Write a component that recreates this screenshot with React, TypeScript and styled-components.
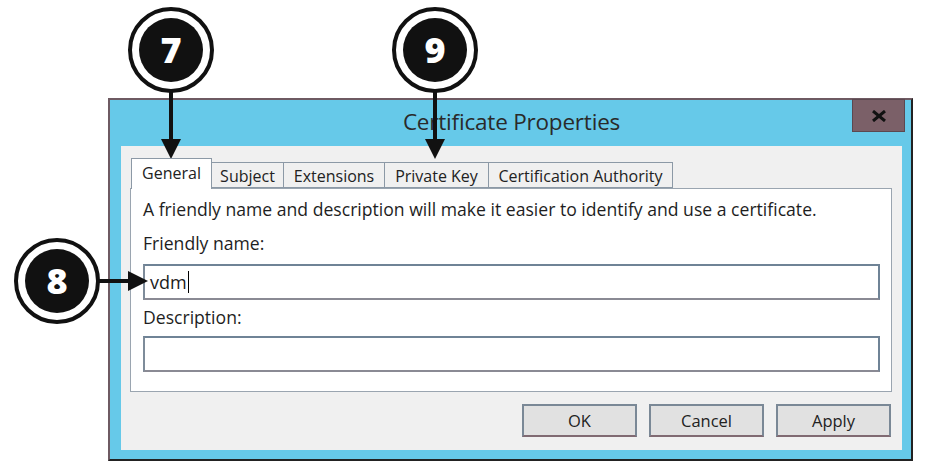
import React from "react";
import styled, { createGlobalStyle } from "styled-components";

const Global = createGlobalStyle`
  html, body { margin: 0; padding: 0; background: #ffffff; }
  body { font-family: "Open Sans", "Noto Sans", "Liberation Sans", sans-serif; color: #1c1c1c; }
`;

const Page = styled.div`
  position: relative;
  width: 926px;
  height: 476px;
  overflow: hidden;
  padding: 98px 0 0 108px;
  box-sizing: border-box;
`;

const Window = styled.div`
  width: 805px;
  height: 363px;
  box-sizing: border-box;
  background: #66c9e9;
  border-top: 2px solid #6e5a62;
  border-left: 2px solid #6e5a62;
  border-right: 2px solid #222;
  border-bottom: 2px solid #222;
  display: flex;
  flex-direction: column;
  padding: 0 9px 9px 11px;
`;

const TitleBar = styled.div`
  height: 46px;
  display: flex;
  align-items: flex-start;
  justify-content: center;
  position: relative;
`;

const Title = styled.div`
  margin-top: 6px;
  font-size: 22.5px;
  color: #2a2a2a;
  letter-spacing: -0.2px;
`;

const CloseButton = styled.div`
  position: absolute;
  right: -3px;
  top: -1px;
  width: 53px;
  height: 33px;
  background: #7b6068;
  border: 1px solid #5c4850;
  box-sizing: border-box;
  display: flex;
  align-items: center;
  justify-content: center;
`;

const Client = styled.div`
  flex: 1;
  background: #f0f0f0;
  display: flex;
  flex-direction: column;
  padding: 12px 10px 13px 9px;
`;

const TabRow = styled.div`
  display: flex;
  align-items: flex-end;
  height: 30px;
  padding-left: 1px;
  position: relative;
  z-index: 1;
`;

const Tab = styled.div<{ $w: number; $active?: boolean }>`
  width: ${(p) => p.$w}px;
  height: ${(p) => (p.$active ? 31 : 26)}px;
  box-sizing: border-box;
  border: 1px solid #8c99a6;
  border-bottom: ${(p) => (p.$active ? "none" : "1px solid #8c99a6")};
  margin-left: ${(p) => (p.$active ? 0 : -1)}px;
  background: ${(p) => (p.$active ? "#ffffff" : "#f0f0f0")};
  font-size: 16px;
  line-height: 20px;
  display: flex;
  justify-content: center;
  align-items: flex-start;
  padding-top: ${(p) => (p.$active ? 4 : 3)}px;
  margin-bottom: ${(p) => (p.$active ? -1 : 0)}px;
  white-space: nowrap;
  color: #222;
  &:first-child { margin-left: 0; }
`;

const Panel = styled.div`
  height: 204px;
  box-sizing: border-box;
  background: #ffffff;
  border: 1px solid #9aa5b0;
  padding: 8px 12px 0 12px;
  display: flex;
  flex-direction: column;
`;

const Label = styled.div<{ $mt?: number }>`
  font-size: 17.6px;
  margin-top: ${(p) => p.$mt ?? 0}px;
  height: 24px;
  line-height: 24px;
  white-space: nowrap;
  color: #1e1e1e;
`;

const Input = styled.div<{ $mt: number }>`
  margin-top: ${(p) => p.$mt}px;
  width: 737px;
  height: 36px;
  box-sizing: border-box;
  border: 2px solid #6f8396;
  border-bottom-color: #8a8a94;
  border-left-color: #7e8c9a;
  background: #fff;
  font-size: 18px;
  display: flex;
  align-items: center;
  padding-left: 5px;
`;

const Caret = styled.span`
  display: inline-block;
  width: 1px;
  height: 22px;
  background: #000;
  margin-left: 1px;
`;

const ButtonRow = styled.div`
  display: flex;
  justify-content: flex-end;
  gap: 12px;
  margin-top: 12px;
  padding-right: 1px;
`;

const Button = styled.div`
  width: 115px;
  height: 33px;
  box-sizing: border-box;
  background: #e1e1e1;
  border: 2px solid #7a8896;
  border-bottom-color: #806a72;
  display: flex;
  align-items: center;
  justify-content: center;
  font-size: 16.5px;
  color: #222;
`;

const Callout = styled.div<{ $x: number; $y: number }>`
  position: absolute;
  left: ${(p) => p.$x - 43}px;
  top: ${(p) => p.$y - 43}px;
  width: 86px;
  height: 86px;
  box-sizing: border-box;
  border-radius: 50%;
  border: 4px solid #111;
  background: #fff;
  display: flex;
  align-items: center;
  justify-content: center;
`;

const CalloutInner = styled.div`
  width: 64px;
  height: 64px;
  border-radius: 50%;
  background: #111;
  color: #fff;
  font-family: "Open Sans", "Liberation Sans", sans-serif;
  font-weight: 800;
  font-size: 36px;
  display: flex;
  align-items: center;
  justify-content: center;
  line-height: 1;
`;

const Arrows = styled.svg`
  position: absolute;
  left: 0;
  top: 0;
  pointer-events: none;
`;

export default function App() {
  return (
    <>
      <Global />
      <Page>
        <Window>
          <TitleBar>
            <Title>Certificate Properties</Title>
            <CloseButton>
              <svg width="16" height="12" viewBox="0 0 16 12">
                <path d="M2 1 L14 11 M14 1 L2 11" stroke="#111" strokeWidth="3" />
              </svg>
            </CloseButton>
          </TitleBar>
          <Client>
            <TabRow>
              <Tab $w={81} $active>General</Tab>
              <Tab $w={73}>Subject</Tab>
              <Tab $w={102}>Extensions</Tab>
              <Tab $w={105}>Private Key</Tab>
              <Tab $w={185}>Certification Authority</Tab>
            </TabRow>
            <Panel>
              <Label>A friendly name and description will make it easier to identify and use a certificate.</Label>
              <Label $mt={10}>Friendly name:</Label>
              <Input $mt={9}>
                vdm<Caret />
              </Input>
              <Label $mt={5}>Description:</Label>
              <Input $mt={7} />
            </Panel>
            <ButtonRow>
              <Button>OK</Button>
              <Button>Cancel</Button>
              <Button>Apply</Button>
            </ButtonRow>
          </Client>
        </Window>

        <Arrows width="926" height="476" viewBox="0 0 926 476">
          <line x1="171" y1="90" x2="171" y2="142" stroke="#111" strokeWidth="4" />
          <polygon points="161,139 181,139 171,159" fill="#111" />
          <line x1="435" y1="90" x2="435" y2="142" stroke="#111" strokeWidth="4" />
          <polygon points="425,139 445,139 435,159" fill="#111" />
          <line x1="98" y1="281" x2="131" y2="281" stroke="#111" strokeWidth="4" />
          <polygon points="128,271 128,291 148,281" fill="#111" />
        </Arrows>
        <Callout $x={171} $y={50}><CalloutInner>7</CalloutInner></Callout>
        <Callout $x={435} $y={50}><CalloutInner>9</CalloutInner></Callout>
        <Callout $x={57} $y={281}><CalloutInner>8</CalloutInner></Callout>
      </Page>
    </>
  );
}
